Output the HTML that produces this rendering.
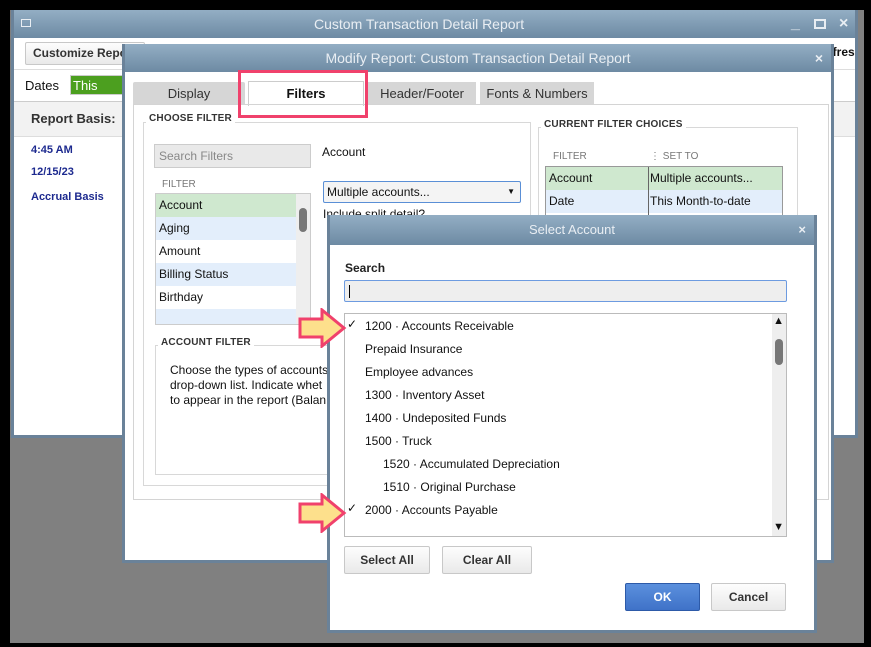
<!DOCTYPE html>
<html><head><meta charset="utf-8"><style>
*{box-sizing:border-box;margin:0;padding:0}
body{width:871px;height:647px;background:#000;position:relative;overflow:hidden;font-family:"Liberation Sans",Arial,sans-serif;font-size:12px;color:#111}
.a{position:absolute}
.tb{background:linear-gradient(#93aec4,#6d8aa3);color:#e9eef3;font-size:14px;text-align:center}
.win{border:3px solid #6a8299;background:#fff}
.t{position:absolute;white-space:nowrap}
.row{position:absolute;left:0;right:0;height:23px;line-height:23px;padding-left:3px}
.btn{position:absolute;border:1px solid #c8c8c8;border-radius:2px;background:linear-gradient(#fdfdfd,#e9e9e9);text-align:center;font-weight:bold;color:#333}
.grp{position:absolute;border:1px solid #d8d8d8}
.lbl{position:absolute;background:#fff;font-size:10px;font-weight:bold;color:#333;padding:0 3px;letter-spacing:.2px}
</style></head><body>
<div class="a" style="left:10px;top:10px;width:854px;height:633px;background:#808080"></div>

<!-- main window -->
<div class="a win" style="left:11px;top:10px;width:847px;height:428px;border-top:none">
 <div class="a tb" style="left:0;top:0;right:0;height:28px;line-height:28px"><span style="position:absolute;left:300px">Custom Transaction Detail Report</span>
  <div class="a" style="left:7px;top:9px;width:10px;height:8px;border:1px solid #e9eef3"></div>
  <span class="a" style="left:777px;top:0;font-size:16px;font-weight:bold">_</span>
  <div class="a" style="left:800px;top:9px;width:12px;height:10px;border:2px solid #e9eef3"></div>
  <span class="a" style="left:825px;top:0;font-size:16px;font-weight:bold">×</span>
 </div>
 <div class="a" style="left:0;top:28px;right:0;height:32px;background:#fff;border-bottom:1px solid #ddd"></div>
 <div class="btn" style="left:11px;top:32px;width:120px;height:23px;line-height:21px;text-align:left;padding-left:7px">Customize Report</div>
 <div class="t" style="left:812px;top:35px;font-weight:bold">efres</div>
 <div class="t" style="left:11px;top:68px;font-size:13px">Dates</div>
 <div class="a" style="left:56px;top:65px;width:60px;height:20px;background:#4c9f1f;color:#fff;font-size:13px;line-height:20px;padding-left:2px;border:1px solid #ccc">This Month</div>
 <div class="a" style="left:0;top:91px;right:0;height:36px;background:#f2f2f2;border-top:1px solid #ccc;border-bottom:1px solid #ddd"></div>
 <div class="t" style="left:17px;top:101px;font-size:13px;font-weight:bold;color:#333">Report Basis:</div>
 <div class="t" style="left:17px;top:134px;color:#1d2a8f;font-weight:bold;font-size:11px">4:45 AM</div>
 <div class="t" style="left:17px;top:156px;color:#1d2a8f;font-weight:bold;font-size:11px">12/15/23</div>
 <div class="t" style="left:17px;top:181px;color:#1d2a8f;font-weight:bold;font-size:11px">Accrual Basis</div>
</div>

<!-- Modify report dialog -->
<div class="a win" style="left:122px;top:44px;width:712px;height:519px;border-top:none">
 <div class="a tb" style="left:0;top:0;right:0;height:28px;line-height:28px">Modify Report: Custom Transaction Detail Report<span class="a" style="right:8px;top:0;font-weight:bold">×</span></div>
 <div class="a" style="left:8px;top:38px;width:112px;height:23px;background:#d6d6d6;text-align:center;line-height:23px;font-size:13px;color:#333;border-radius:2px 2px 0 0">Display</div>
 <div class="a" style="left:123px;top:37px;width:116px;height:25px;background:#fff;border:1px solid #ccc;border-bottom:none;text-align:center;line-height:23px;font-size:13px;font-weight:bold">Filters</div>
 <div class="a" style="left:243px;top:38px;width:108px;height:23px;background:#d6d6d6;text-align:center;line-height:23px;font-size:13px;color:#333">Header/Footer</div>
 <div class="a" style="left:355px;top:38px;width:114px;height:23px;background:#d6d6d6;text-align:center;line-height:23px;font-size:13px;color:#333">Fonts &amp; Numbers</div>
 <div class="grp" style="left:8px;top:60px;width:696px;height:396px;border-color:#d4d4d4"></div>
 <div class="grp" style="left:18px;top:78px;width:388px;height:364px"></div>
 <div class="lbl" style="left:21px;top:69px">CHOOSE FILTER</div>
 <div class="a" style="left:29px;top:100px;width:157px;height:24px;background:#e9e9e9;border:1px solid #ccc;color:#888;font-size:12px;line-height:22px;padding-left:4px">Search Filters</div>
 <div class="t" style="left:197px;top:101px;font-size:12px">Account</div>
 <div class="t" style="left:37px;top:135px;font-size:10px;color:#777">FILTER</div>
 <div class="a" style="left:30px;top:149px;width:156px;height:132px;border:1px solid #ccc;overflow:hidden;font-size:12px">
  <div class="row" style="top:0;background:#cfe8cf">Account</div>
  <div class="row" style="top:23px;background:#e3eefb">Aging</div>
  <div class="row" style="top:46px">Amount</div>
  <div class="row" style="top:69px;background:#e3eefb">Billing Status</div>
  <div class="row" style="top:92px">Birthday</div>
  <div class="row" style="top:115px;background:#e3eefb"></div>
  <div class="a" style="right:0;top:0;width:14px;height:132px;background:#eee"></div>
  <div class="a" style="right:3px;top:14px;width:8px;height:24px;background:#777;border-radius:4px"></div>
 </div>
 <div class="a" style="left:198px;top:137px;width:198px;height:22px;border:1px solid #5a8fd6;border-radius:2px;background:#f4f4f4;font-size:12px;line-height:20px;padding-left:3px">Multiple accounts...<span class="a" style="right:5px;top:0;font-size:8px">▼</span></div>
 <div class="t" style="left:198px;top:163px;font-size:12px">Include split detail?</div>
 <div class="grp" style="left:30px;top:301px;width:362px;height:130px"></div>
 <div class="lbl" style="left:33px;top:293px">ACCOUNT FILTER</div>
 <div class="t" style="left:45px;top:319px;font-size:12px;line-height:15px;color:#111">Choose the types of accounts<br>drop-down list. Indicate whet<br>to appear in the report (Balan</div>
 <div class="grp" style="left:413px;top:83px;width:260px;height:300px"></div>
 <div class="lbl" style="left:416px;top:75px">CURRENT FILTER CHOICES</div>
 <div class="t" style="left:428px;top:107px;font-size:10px;color:#777">FILTER</div>
 <div class="t" style="left:525px;top:107px;font-size:10px;color:#777">⋮ SET TO</div>
 <div class="a" style="left:420px;top:122px;width:238px;height:60px;border:1px solid #999;font-size:12px">
  <div class="row" style="top:0;background:#cfe8cf">Account<span class="a" style="left:104px">Multiple accounts...</span></div>
  <div class="row" style="top:23px;background:#e3eefb">Date<span class="a" style="left:104px">This Month-to-date</span></div>
  <div class="a" style="left:102px;top:0;width:1px;height:60px;background:#666"></div>
 </div>
</div>

<!-- pink highlight -->
<div class="a" style="left:238px;top:70px;width:130px;height:48px;border:3px solid #f0416c"></div>

<!-- Select account dialog -->
<div class="a win" style="left:327px;top:215px;width:490px;height:418px;border-top:none">
 <div class="a tb" style="left:0;top:0;right:0;height:30px;line-height:30px;font-size:13px">Select Account<span class="a" style="right:8px;top:0;font-weight:bold">×</span></div>
 <div class="t" style="left:15px;top:46px;font-weight:bold;color:#222">Search</div>
 <div class="a" style="left:14px;top:65px;width:443px;height:22px;background:#eee;border:1px solid #6d9be0;border-radius:2px"><div class="a" style="left:4px;top:4px;width:1px;height:13px;background:#000"></div></div>
 <div class="a" style="left:14px;top:98px;width:443px;height:224px;border:1px solid #bbb;font-size:12px">
  <div class="t" style="left:2px;top:3px">✓</div>
  <div class="t" style="left:20px;top:5px">1200 · Accounts Receivable</div>
  <div class="t" style="left:20px;top:28px">Prepaid Insurance</div>
  <div class="t" style="left:20px;top:51px">Employee advances</div>
  <div class="t" style="left:20px;top:74px">1300 · Inventory Asset</div>
  <div class="t" style="left:20px;top:97px">1400 · Undeposited Funds</div>
  <div class="t" style="left:20px;top:120px">1500 · Truck</div>
  <div class="t" style="left:38px;top:143px">1520 · Accumulated Depreciation</div>
  <div class="t" style="left:38px;top:166px">1510 · Original Purchase</div>
  <div class="t" style="left:2px;top:187px">✓</div>
  <div class="t" style="left:20px;top:189px">2000 · Accounts Payable</div>
  <div class="a" style="right:0;top:0;width:14px;height:222px;background:#eee"></div>
  <div class="t" style="right:2px;top:1px;font-size:11px">▲</div>
  <div class="t" style="right:2px;top:207px;font-size:11px">▼</div>
  <div class="a" style="right:3px;top:25px;width:8px;height:26px;background:#777;border-radius:4px"></div>
 </div>
 <div class="btn" style="left:14px;top:331px;width:86px;height:28px;line-height:26px">Select All</div>
 <div class="btn" style="left:112px;top:331px;width:90px;height:28px;line-height:26px">Clear All</div>
 <div class="btn" style="left:295px;top:368px;width:75px;height:28px;line-height:26px;background:linear-gradient(#5b90dd,#3f72c8);border-color:#2d5aa8;color:#fff">OK</div>
 <div class="btn" style="left:381px;top:368px;width:75px;height:28px;line-height:26px">Cancel</div>
</div>

<!-- arrows -->
<svg class="a" style="left:298px;top:308px" width="50" height="40"><path d="M2 11H24V2L46 20L24 38V29H2Z" fill="#fde08c" stroke="#f0416c" stroke-width="3"/></svg>
<svg class="a" style="left:298px;top:493px" width="50" height="40"><path d="M2 11H24V2L46 20L24 38V29H2Z" fill="#fde08c" stroke="#f0416c" stroke-width="3"/></svg>
</body></html>
